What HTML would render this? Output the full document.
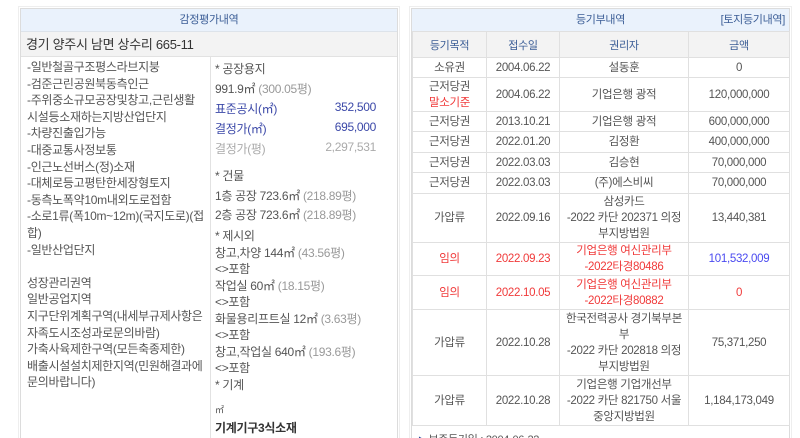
<!DOCTYPE html>
<html><head><meta charset="utf-8"><style>
*{margin:0;padding:0;box-sizing:border-box}
html,body{width:800px;height:438px;overflow:hidden}
body{background:#fff;font-family:"Liberation Sans","Noto Sans CJK KR",sans-serif;font-size:12px;color:#555;position:relative;letter-spacing:-0.3px}
.p{position:absolute;border:1px solid #dcdcdc;outline:1px solid #eee;outline-offset:1px}
.a{position:absolute;white-space:nowrap}
.hd{position:absolute;background:#eaf2fc;color:#3b5d96;font-size:11px;text-align:center;line-height:22px;border-bottom:1px solid #dde3ea}
table{position:absolute;border-collapse:collapse;font-size:11.5px;table-layout:fixed}
td{border:1px solid #e0e0e0;text-align:center;line-height:16px;color:#555;padding:0;white-space:nowrap;overflow:hidden}
th{border:1px solid #e0e0e0;background:#f3f3f3;color:#3b5d96;font-weight:normal;font-size:11px;height:26px;padding:0}
.r{color:#f03a3a}
</style></head><body>
<div class="p" style="left:20px;top:8px;width:378px;height:440px">
<div class="hd" style="left:0;top:0;width:376px">감정평가내역</div>
<div class="a" style="left:0;top:23px;width:376px;height:25px;background:#f3f3f3;border-bottom:1px solid #e2e2e2;line-height:25px;padding-left:5px;font-size:13px;color:#333">경기 양주시 남면 상수리 665-11</div>
<div class="a" style="left:189px;top:48px;width:1px;height:400px;background:#e2e2e2"></div>
<div class="a" style="left:6px;top:50px;line-height:16.6px;font-size:12px;letter-spacing:-0.3px">-일반철골구조평스라브지붕<br>-검준근린공원북동측인근<br>-주위중소규모공장및창고,근린생활<br>시설등소재하는지방산업단지<br>-차량진출입가능<br>-대중교통사정보통<br>-인근노선버스(정)소재<br>-대체로등고평탄한세장형토지<br>-동측노폭약10m내외도로접함<br>-소로1류(폭10m~12m)(국지도로)(접<br>합)<br>-일반산업단지<br><br>성장관리권역<br>일반공업지역<br>지구단위계획구역(내세부규제사항은<br>자족도시조성과로문의바람)<br>가축사육제한구역(모든축종제한)<br>배출시설설치제한지역(민원해결과에<br>문의바랍니다)</div>
<div class="a" style="left:194px;top:51px">* 공장용지</div>
<div class="a" style="left:194px;top:71px">991.9㎡ <span style="color:#999">(300.05평)</span></div>
<div class="a" style="left:194px;top:91px;color:#3b48a8">표준공시(㎡)</div><div class="a" style="left:300px;top:91px;width:55px;text-align:right;color:#3b48a8">352,500</div>
<div class="a" style="left:194px;top:111px;color:#3b48a8">결정가(㎡)</div><div class="a" style="left:300px;top:111px;width:55px;text-align:right;color:#3b48a8">695,000</div>
<div class="a" style="left:194px;top:131px;color:#aaa">결정가(평)</div><div class="a" style="left:285px;top:131px;width:70px;text-align:right;color:#aaa">2,297,531</div>
<div class="a" style="left:194px;top:158px">* 건물</div>
<div class="a" style="left:194px;top:178px">1층 공장 723.6㎡ <span style="color:#999">(218.89평)</span></div>
<div class="a" style="left:194px;top:197px">2층 공장 723.6㎡ <span style="color:#999">(218.89평)</span></div>
<div class="a" style="left:194px;top:219px;line-height:16.5px">* 제시외<br>창고,차양 144㎡ <span style="color:#999">(43.56평)</span><br>&lt;&gt;포함<br>작업실 60㎡ <span style="color:#999">(18.15평)</span><br>&lt;&gt;포함<br>화물용리프트실 12㎡ <span style="color:#999">(3.63평)</span><br>&lt;&gt;포함<br>창고,작업실 640㎡ <span style="color:#999">(193.6평)</span><br>&lt;&gt;포함<br>* 기계</div>
<div class="a" style="left:194px;top:394px;font-size:9px">㎡</div>
<div class="a" style="left:194px;top:410px;font-weight:bold;color:#333">기계기구3식소재</div>
</div>
<div class="p" style="left:411px;top:8px;width:379px;height:440px">
<div class="hd" style="left:0;top:0;width:377px">등기부내역<span style="position:absolute;right:4px">[토지등기내역]</span></div>
<table style="left:0;top:22px;width:377px">
<colgroup><col style="width:74px"><col style="width:73px"><col style="width:129px"><col style="width:101px"></colgroup>
<tr><th>등기목적</th><th>접수일</th><th>권리자</th><th>금액</th></tr>
<tr><td style="height:20px">소유권</td><td>2004.06.22</td><td>설동훈</td><td>0</td></tr>
<tr><td style="height:34px">근저당권<br><span class="r">말소기준</span></td><td>2004.06.22</td><td>기업은행 광적</td><td>120,000,000</td></tr>
<tr><td style="height:20px">근저당권</td><td>2013.10.21</td><td>기업은행 광적</td><td>600,000,000</td></tr>
<tr><td style="height:21px">근저당권</td><td>2022.01.20</td><td>김정환</td><td>400,000,000</td></tr>
<tr><td style="height:20px">근저당권</td><td>2022.03.03</td><td>김승현</td><td>70,000,000</td></tr>
<tr><td style="height:21px">근저당권</td><td>2022.03.03</td><td>(주)에스비씨</td><td>70,000,000</td></tr>
<tr><td style="height:49px">가압류</td><td>2022.09.16</td><td>삼성카드<br>-2022 카단 202371 의정<br>부지방법원</td><td>13,440,381</td></tr>
<tr><td class="r" style="height:33px">임의</td><td class="r">2022.09.23</td><td class="r">기업은행 여신관리부<br>-2022타경80486</td><td style="color:#4a4af0">101,532,009</td></tr>
<tr><td class="r" style="height:34px">임의</td><td class="r">2022.10.05</td><td class="r">기업은행 여신관리부<br>-2022타경80882</td><td class="r">0</td></tr>
<tr><td style="height:66px">가압류</td><td>2022.10.28</td><td>한국전력공사 경기북부본<br>부<br>-2022 카단 202818 의정<br>부지방법원</td><td>75,371,250</td></tr>
<tr><td style="height:50px">가압류</td><td>2022.10.28</td><td>기업은행 기업개선부<br>-2022 카단 821750 서울<br>중앙지방법원</td><td>1,184,173,049</td></tr>
</table>
<div class="a" style="left:6px;top:422px;font-size:11px"><span style="color:#2a4a9a;font-size:8px">▶</span> 보존등기일 : 2004-06-22</div>
</div>
</body></html>
